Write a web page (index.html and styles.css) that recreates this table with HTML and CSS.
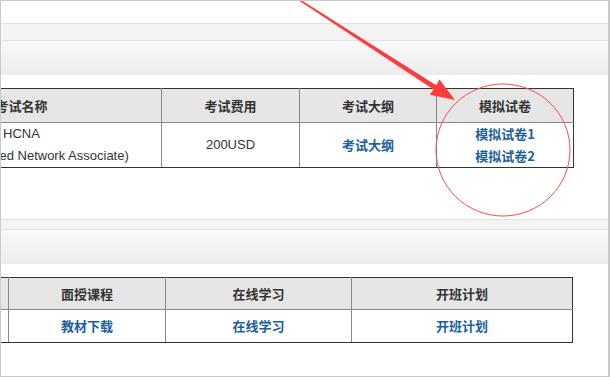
FILE: index.html
```html
<!DOCTYPE html>
<html lang="zh-CN">
<head>
<meta charset="utf-8">
<title>HCNA 考试信息</title>
<link rel="stylesheet" href="styles.css">
</head>
<body>
<div class="frame">
  <section class="section section-first">
    <div class="sechead">
      <div class="sechead-sub"></div>
      <div class="sechead-title"></div>
    </div>
    <div class="table-wrap">
      <table class="info info-exam">
        <colgroup>
          <col class="c-name"><col class="c-fee"><col class="c-outline"><col class="c-mock">
        </colgroup>
        <thead>
          <tr><th>考试名称</th><th>考试费用</th><th>考试大纲</th><th>模拟试卷</th></tr>
        </thead>
        <tbody>
          <tr>
            <td class="plain">HCNA<br>(Huawei Certified Network Associate)</td>
            <td class="plain">200USD</td>
            <td><a href="#">考试大纲</a></td>
            <td><a href="#">模拟试卷1</a><br><a href="#">模拟试卷2</a></td>
          </tr>
        </tbody>
      </table>
    </div>
  </section>

  <section class="section section-second">
    <div class="sechead">
      <div class="sechead-sub short"></div>
      <div class="sechead-title"></div>
    </div>
    <div class="table-wrap">
      <table class="info info-course">
        <colgroup>
          <col class="d-first"><col class="d-face"><col class="d-online"><col class="d-plan">
        </colgroup>
        <thead>
          <tr><th>&nbsp;</th><th>面授课程</th><th>在线学习</th><th>开班计划</th></tr>
        </thead>
        <tbody>
          <tr>
            <td>&nbsp;</td>
            <td><a href="#">教材下载</a></td>
            <td><a href="#">在线学习</a></td>
            <td><a href="#">开班计划</a></td>
          </tr>
        </tbody>
      </table>
    </div>
  </section>

  <svg class="annot" width="610" height="378" viewBox="0 0 610 378" aria-hidden="true">
    <polygon fill="#ff3b3b" points="296.5,-1 299.5,-1 436.2,85.2 439.5,79.5 455,100 429.9,94.7 433.6,89.4"/>
    <ellipse cx="503" cy="150" rx="67" ry="66" fill="none" stroke="#ff4a4a" stroke-width="1"/>
  </svg>
</div>
</body>
</html>
```

FILE: styles.css
```css
* { box-sizing: border-box; }

html, body {
  margin: 0;
  padding: 0;
  background: #ffffff;
}

.frame {
  position: relative;
  width: 610px;
  height: 377px;
  border-top: 1px solid #cacaca;
  border-left: 1px solid #cacaca;
  border-right: 2px solid #cacaca;
  border-bottom: 1px solid #cacaca;
  overflow: hidden;
  font-family: "Liberation Sans", Arial, "Noto Sans CJK SC", sans-serif;
  color: #333333;
}

.section-first { padding-top: 22px; }
.section-second { margin-top: 51px; }

.sechead { border-top: 1px solid #e2e2e2; }

.sechead-sub {
  height: 17px;
  background: #f4f4f4;
  border-bottom: 1px solid #e2e2e2;
}
.sechead-sub.short { height: 10px; }

.sechead-title {
  height: 34px;
  background: linear-gradient(#f9f9f9, #ececec);
}

.table-wrap { margin-top: 13px; }

.info {
  border-collapse: collapse;
  table-layout: fixed;
  font-size: 13px;
}

.info th,
.info td {
  padding: 0;
  text-align: center;
  vertical-align: middle;
  border: 1px solid #888888;
}

.info tr > :first-child { border-left: 1px solid #333333; }
.info tr > :last-child { border-right: 1px solid #333333; }
.info thead th { border-top: 1px solid #333333; }
.info tbody td { border-bottom: 1px solid #333333; }

.info th {
  background: #e6e6e6;
  font-family: "Noto Sans CJK SC", sans-serif;
  font-weight: bold;
  color: #333333;
}

.info td.plain {
  font-family: "Liberation Sans", Arial, sans-serif;
  color: #333333;
  line-height: 22px;
}

.info a {
  color: #1b5f9c;
  font-family: "Noto Sans CJK SC", sans-serif;
  font-weight: bold;
  text-decoration: none;
  line-height: 22px;
}

/* first table */
.info-exam {
  width: 692px;
  margin-left: -120px;
}
.info-exam thead tr { height: 34px; }
.info-exam tbody tr { height: 44px; }
.c-name { width: 280px; }
.c-fee { width: 138px; }
.c-outline { width: 137px; }
.c-mock { width: 137px; }

/* second table */
.info-course {
  width: 665px;
  margin-left: -94px;
}
.info-course thead tr { height: 32px; }
.info-course tbody tr { height: 33px; }
.d-first { width: 101px; }
.d-face { width: 157px; }
.d-online { width: 186px; }
.d-plan { width: 221px; }

.annot {
  position: absolute;
  left: -1px;
  top: -1px;
  pointer-events: none;
}
```
